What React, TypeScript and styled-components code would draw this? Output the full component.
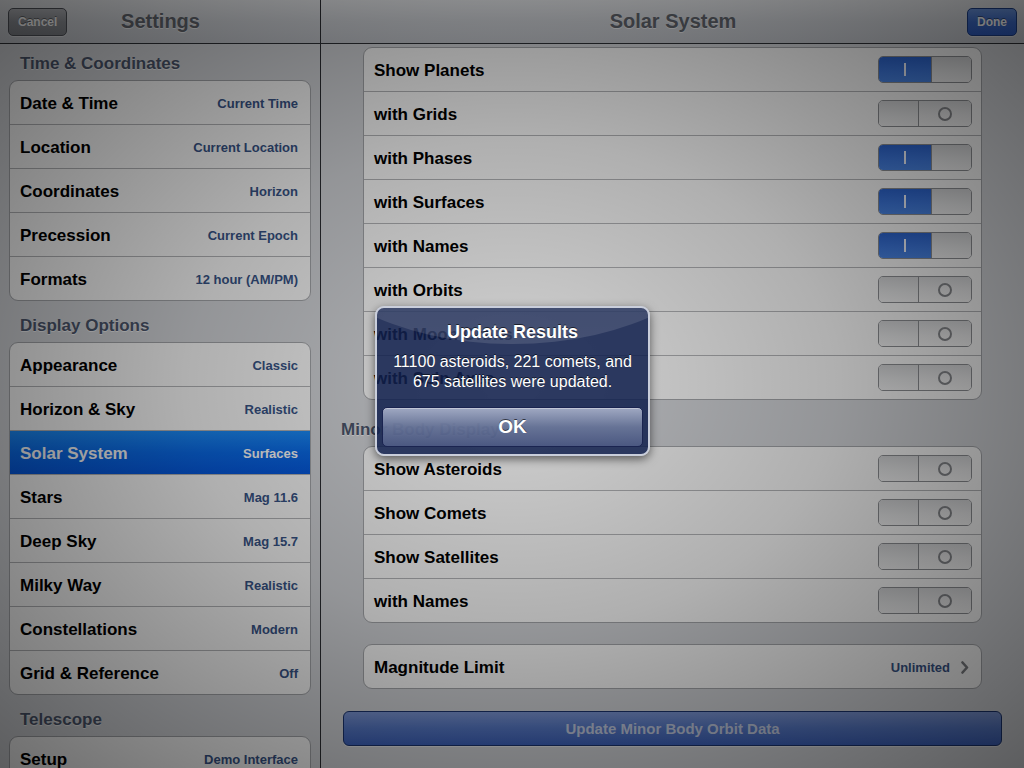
import * as React from "react";
import styled, { createGlobalStyle } from "styled-components";

const GlobalStyle = createGlobalStyle`
  html, body {
    margin: 0;
    padding: 0;
    background: #000;
  }
  body {
    font-family: "Liberation Sans", Arial, Helvetica, sans-serif;
    -webkit-font-smoothing: antialiased;
  }
`;

const Screen = styled.div`
  position: relative;
  width: 1024px;
  height: 768px;
  overflow: hidden;
  display: flex;
  background: #d3d5d9;
`;

const Pane = styled.div<{ width?: number }>`
  display: flex;
  flex-direction: column;
  flex: ${({ width }) => (width ? `0 0 ${width}px` : "1")};
  min-width: 0;
  background: #d3d5d9;
  border-right: ${({ width }) => (width ? "1px solid #2b2d32" : "none")};
`;

const NavBar = styled.div`
  height: 43px;
  flex: 0 0 43px;
  border-bottom: 1px solid #2e3136;
  background: linear-gradient(#eef0f3, #d2d5da 50%, #c1c4ca);
  display: grid;
  grid-template-columns: 70px 1fr 70px;
  align-items: center;
  padding: 0 7px 0 8px;
`;

const NavTitle = styled.div`
  grid-column: 2;
  text-align: center;
  font-size: 20px;
  font-weight: bold;
  color: #62666e;
  text-shadow: 0 1px 0 rgba(255, 255, 255, 0.6);
`;

const BarButton = styled.div<{ tone: "gray" | "blue"; side: "left" | "right" }>`
  grid-column: ${({ side }) => (side === "left" ? 1 : 3)};
  grid-row: 1;
  justify-self: ${({ side }) => (side === "left" ? "start" : "end")};
  height: 26px;
  padding: 0 9px;
  display: flex;
  align-items: center;
  border-radius: 5px;
  font-size: 12px;
  font-weight: bold;
  color: #fff;
  text-shadow: 0 -1px 0 rgba(0, 0, 0, 0.4);
  border: 1px solid ${({ tone }) => (tone === "blue" ? "#1d3f88" : "#50535a")};
  background: ${({ tone }) =>
    tone === "blue"
      ? "linear-gradient(#6c97e2, #3e6dcc 50%, #2f5cbf)"
      : "linear-gradient(#b7b9be, #8f9298 50%, #7f8288)"};
  box-shadow: 0 1px 0 rgba(255, 255, 255, 0.4);
`;

const Scroll = styled.div<{ top: number; side: number }>`
  flex: 1;
  padding: ${({ top, side }) => `${top}px ${side}px 0`};
  overflow: hidden;
`;

const SectionHeader = styled.div<{ gap: number; inset: number }>`
  margin: ${({ gap }) => gap + 1}px 0 6px ${({ inset }) => inset}px;
  height: 20px;
  line-height: 20px;
  font-size: 17px;
  font-weight: bold;
  color: #4c566c;
  text-shadow: 0 1px 0 rgba(255, 255, 255, 0.7);
`;

const Card = styled.div<{ gap?: number }>`
  margin-top: ${({ gap }) => gap ?? 0}px;
  border: 1px solid #a4a6aa;
  border-radius: 9px;
  background: #fbfbfb;
  overflow: hidden;
`;

const Row = styled.div<{ selected?: boolean; compact?: boolean }>`
  height: 43px;
  box-sizing: border-box;
  display: flex;
  align-items: center;
  justify-content: space-between;
  padding: 2px ${({ compact }) => (compact ? 9 : 12)}px 0 10px;
  & + & {
    border-top: 1px solid #b3b4b7;
    height: 44px;
  }
  background: ${({ selected }) =>
    selected ? "linear-gradient(#1b8af6, #0a6ae8 50%, #0558de)" : "transparent"};
`;

const Label = styled.span<{ selected?: boolean }>`
  font-size: 17px;
  font-weight: bold;
  color: ${({ selected }) => (selected ? "#fff" : "#000")};
  white-space: nowrap;
`;

const Value = styled.span<{ selected?: boolean }>`
  font-size: 13px;
  font-weight: bold;
  color: ${({ selected }) => (selected ? "#fff" : "#385487")};
  white-space: nowrap;
  display: flex;
  align-items: center;
  gap: 11px;
`;

const SwitchBox = styled.div`
  width: 94px;
  height: 27px;
  margin-top: -2px;
  box-sizing: border-box;
  border: 1px solid #8d8f93;
  border-radius: 5px;
  overflow: hidden;
  display: flex;
`;

const Track = styled.div<{ on: boolean }>`
  flex: 1;
  display: flex;
  align-items: center;
  justify-content: center;
  background: ${({ on }) =>
    on
      ? "linear-gradient(#2c64cf, #3f7ae0 60%, #4a86e6)"
      : "linear-gradient(#d9dadc, #ececed 55%, #f6f6f6)"};
`;

const Thumb = styled.div<{ on: boolean }>`
  flex: 0 0 40px;
  box-sizing: border-box;
  border-${({ on }) => (on ? "left" : "right")}: 1px solid #8d8f93;
  background: linear-gradient(#d5d6d8, #e9eaeb 60%, #f3f3f4);
`;

const OnMark = styled.span`
  width: 2px;
  height: 13px;
  background: #f1f5ff;
`;

const OffMark = styled.span`
  width: 10px;
  height: 10px;
  border-radius: 50%;
  border: 2px solid #85878b;
`;

const Toggle: React.FC<{ on: boolean }> = ({ on }) => (
  <SwitchBox>
    {on ? (
      <>
        <Track on>
          <OnMark />
        </Track>
        <Thumb on />
      </>
    ) : (
      <>
        <Thumb on={false} />
        <Track on={false}>
          <OffMark />
        </Track>
      </>
    )}
  </SwitchBox>
);

const WideButton = styled.div`
  margin: 22px -20px 0;
  height: 33px;
  border: 1px solid #1b3470;
  border-radius: 6px;
  display: flex;
  align-items: center;
  justify-content: center;
  font-size: 15px;
  font-weight: bold;
  color: #c4cde2;
  background: linear-gradient(#7d97d6, #5679c8 50%, #3e63bd);
  box-shadow: 0 1px 0 rgba(255, 255, 255, 0.5);
`;

const Dim = styled.div`
  position: absolute;
  inset: 0;
  background: radial-gradient(ellipse at 50% 50%, rgba(0, 0, 0, 0.16) 0%, rgba(0, 0, 0, 0.3) 45%, rgba(0, 0, 0, 0.56) 100%);
  display: flex;
  align-items: center;
  justify-content: center;
`;

const Alert = styled.div`
  position: relative;
  width: 275px;
  height: 150px;
  box-sizing: border-box;
  margin: -6px 0 0 1px;
  padding: 13px 5px 5px;
  border: 2px solid #c9cedb;
  border-radius: 9px;
  background: rgba(18, 33, 78, 0.86);
  box-shadow: 0 3px 10px rgba(0, 0, 0, 0.55);
  overflow: hidden;
  color: #fff;
  text-align: center;
  &::before {
    content: "";
    position: absolute;
    left: -80px;
    right: -80px;
    top: -200px;
    height: 236px;
    border-radius: 50%;
    background: linear-gradient(rgba(255, 255, 255, 0.04), rgba(255, 255, 255, 0.12));
    pointer-events: none;
  }
`;

const AlertTitle = styled.div`
  position: relative;
  font-size: 18px;
  font-weight: bold;
  line-height: 22px;
  text-shadow: 0 -1px 0 rgba(0, 0, 0, 0.6);
`;

const AlertText = styled.div`
  position: relative;
  margin-top: 9px;
  font-size: 16px;
  line-height: 20px;
  text-shadow: 0 -1px 0 rgba(0, 0, 0, 0.6);
`;

const AlertButton = styled.div`
  position: relative;
  margin-top: 15px;
  height: 40px;
  box-sizing: border-box;
  border: 1px solid #1a2450;
  border-radius: 5px;
  display: flex;
  align-items: center;
  justify-content: center;
  font-size: 19px;
  font-weight: bold;
  text-shadow: 0 -1px 0 rgba(0, 0, 0, 0.6);
  background: linear-gradient(rgba(190, 198, 220, 0.8), rgba(130, 142, 175, 0.7) 50%, rgba(95, 108, 150, 0.65));
  box-shadow: inset 0 1px 0 rgba(255, 255, 255, 0.35);
`;

const Chevron = () => (
  <svg width="8" height="13" viewBox="0 0 8 13">
    <path d="M1.5 1.5 L6 6.5 L1.5 11.5" fill="none" stroke="#7d7f83" strokeWidth="2.6" strokeLinecap="round" strokeLinejoin="round" />
  </svg>
);

type Item = [string, string];

const timeItems: Item[] = [
  ["Date & Time", "Current Time"],
  ["Location", "Current Location"],
  ["Coordinates", "Horizon"],
  ["Precession", "Current Epoch"],
  ["Formats", "12 hour (AM/PM)"],
];

const displayItems: Item[] = [
  ["Appearance", "Classic"],
  ["Horizon & Sky", "Realistic"],
  ["Solar System", "Surfaces"],
  ["Stars", "Mag 11.6"],
  ["Deep Sky", "Mag 15.7"],
  ["Milky Way", "Realistic"],
  ["Constellations", "Modern"],
  ["Grid & Reference", "Off"],
];

const planetItems: [string, boolean][] = [
  ["Show Planets", true],
  ["with Grids", false],
  ["with Phases", true],
  ["with Surfaces", true],
  ["with Names", true],
  ["with Orbits", false],
  ["with Moon Orbits", false],
  ["with Spin Axes", false],
];

const minorItems: [string, boolean][] = [
  ["Show Asteroids", false],
  ["Show Comets", false],
  ["Show Satellites", false],
  ["with Names", false],
];

const SettingsCard: React.FC<{ items: Item[]; selected?: string }> = ({ items, selected }) => (
  <Card>
    {items.map(([label, value]) => {
      const sel = label === selected;
      return (
        <Row key={label} selected={sel}>
          <Label selected={sel}>{label}</Label>
          <Value selected={sel}>{value}</Value>
        </Row>
      );
    })}
  </Card>
);

const SwitchCard: React.FC<{ items: [string, boolean][] }> = ({ items }) => (
  <Card>
    {items.map(([label, on]) => (
      <Row key={label} compact>
        <Label>{label}</Label>
        <Toggle on={on} />
      </Row>
    ))}
  </Card>
);

export default function App() {
  return (
    <>
      <GlobalStyle />
      <Screen>
        <Pane width={320}>
          <NavBar>
            <BarButton tone="gray" side="left">Cancel</BarButton>
            <NavTitle>Settings</NavTitle>
          </NavBar>
          <Scroll top={0} side={9}>
            <SectionHeader gap={9} inset={11}>Time &amp; Coordinates</SectionHeader>
            <SettingsCard items={timeItems} />
            <SectionHeader gap={14} inset={11}>Display Options</SectionHeader>
            <SettingsCard items={displayItems} selected="Solar System" />
            <SectionHeader gap={14} inset={11}>Telescope</SectionHeader>
            <SettingsCard items={[["Setup", "Demo Interface"]]} />
          </Scroll>
        </Pane>
        <Pane>
          <NavBar>
            <NavTitle>Solar System</NavTitle>
            <BarButton tone="blue" side="right">Done</BarButton>
          </NavBar>
          <Scroll top={3} side={42}>
            <SwitchCard items={planetItems} />
            <SectionHeader gap={19} inset={-22}>Minor Body Display</SectionHeader>
            <SwitchCard items={minorItems} />
            <Card gap={21}>
              <Row>
                <Label>Magnitude Limit</Label>
                <Value>
                  Unlimited
                  <Chevron />
                </Value>
              </Row>
            </Card>
            <WideButton>Update Minor Body Orbit Data</WideButton>
          </Scroll>
        </Pane>
        <Dim>
          <Alert>
            <AlertTitle>Update Results</AlertTitle>
            <AlertText>
              11100 asteroids, 221 comets, and
              <br />
              675 satellites were updated.
            </AlertText>
            <AlertButton>OK</AlertButton>
          </Alert>
        </Dim>
      </Screen>
    </>
  );
}
